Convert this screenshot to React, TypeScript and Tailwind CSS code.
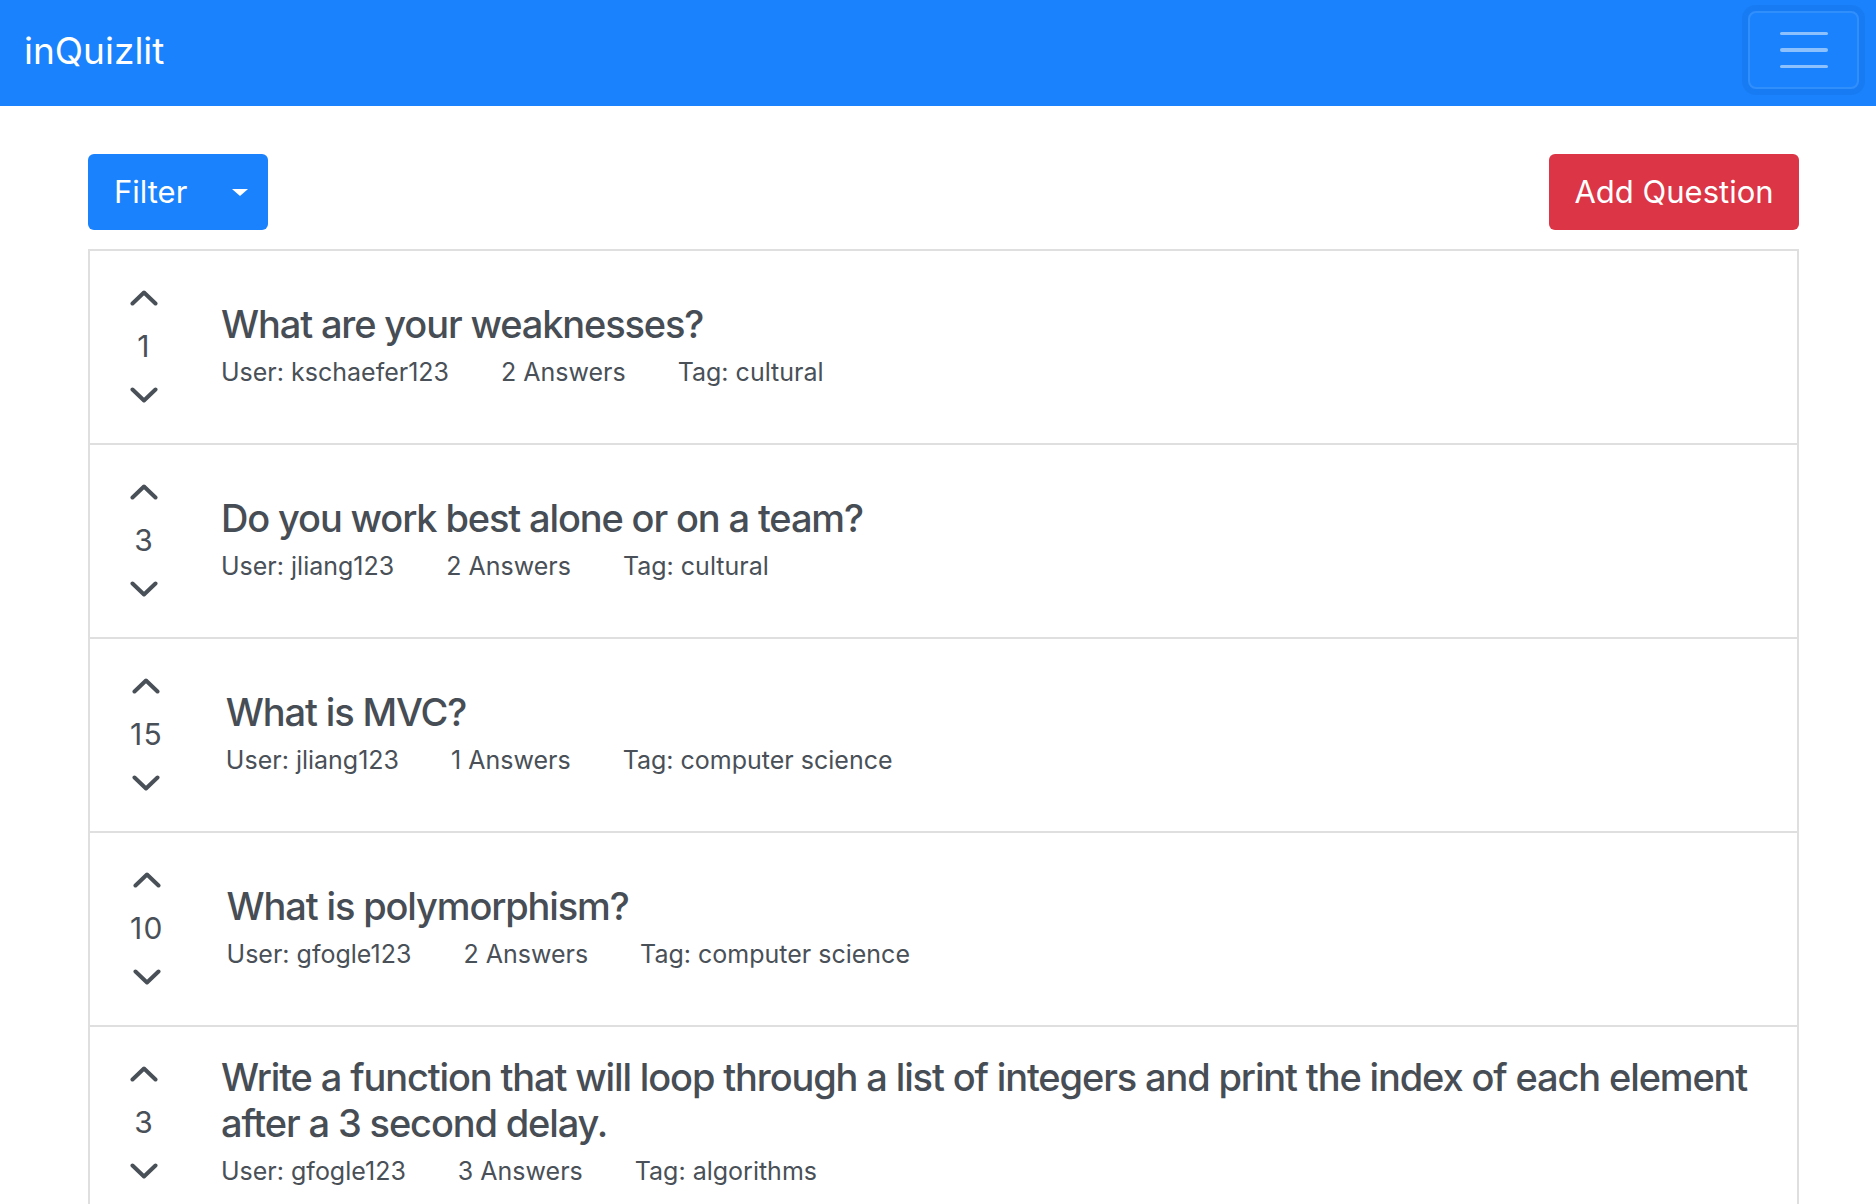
import React from 'react';

type Question = {
  votes: number;
  title: string;
  user: string;
  answers: number;
  tag: string;
};

const questions: Question[] = [
  { votes: 1, title: 'What are your weaknesses?', user: 'kschaefer123', answers: 2, tag: 'cultural' },
  { votes: 3, title: 'Do you work best alone or on a team?', user: 'jliang123', answers: 2, tag: 'cultural' },
  { votes: 15, title: 'What is MVC?', user: 'jliang123', answers: 1, tag: 'computer science' },
  { votes: 10, title: 'What is polymorphism?', user: 'gfogle123', answers: 2, tag: 'computer science' },
  {
    votes: 3,
    title:
      'Write a function that will loop through a list of integers and print the index of each element after a 3 second delay.',
    user: 'gfogle123',
    answers: 3,
    tag: 'algorithms',
  },
];

function Chevron({ up }: { up?: boolean }) {
  return (
    <svg width="28" height="16" viewBox="0 0 28 16" fill="none">
      <path
        d={up ? 'M2.5 13.5 L14 2.5 L25.5 13.5' : 'M2.5 2.5 L14 13.5 L25.5 2.5'}
        stroke="#495057"
        strokeWidth="4"
        strokeLinecap="round"
        strokeLinejoin="round"
      />
    </svg>
  );
}

function QuestionRow({ q }: { q: Question }) {
  return (
    <div className="flex items-center border-b-2 border-[#dfdfdf] pl-[40px] pr-[40px] py-[27px]">
      <div className="flex flex-col items-center shrink-0">
        <button className="h-[40px] flex items-center justify-center">
          <Chevron up />
        </button>
        <div className="h-[56px] flex items-center text-[30px] leading-none tracking-[0.04em] text-[#495057]">{q.votes}</div>
        <button className="h-[42px] flex items-center justify-center">
          <Chevron />
        </button>
      </div>
      <div className="ml-[63px] flex-1 min-w-0">
        <h3 className="text-[38px] leading-[46px] font-medium tracking-[-0.03em] text-[#474d54]">{q.title}</h3>
        <div className="mt-[8px] mb-[4px] flex gap-[52px] text-[25px] leading-[34px] text-[#495057]">
          <span>User: {q.user}</span>
          <span>{q.answers} Answers</span>
          <span>Tag: {q.tag}</span>
        </div>
      </div>
    </div>
  );
}

export default function App() {
  return (
    <div className="min-h-screen bg-white font-['Inter','Liberation_Sans',sans-serif]">
      <nav className="h-[106px] bg-[#1a82fc] flex items-start justify-between pl-[24px] pr-[17px]">
        <a className="mt-[32px] text-[37px] leading-none text-white">inQuizlit</a>
        <button className="mt-[11px] w-[111px] h-[78px] rounded-[8px] border-2 border-white/10 shadow-[0_0_0_6px_rgba(0,50,140,0.08)] flex flex-col items-center justify-center gap-[13px]">
          <span className="block w-[48px] h-[3.5px] rounded-full bg-white/50"></span>
          <span className="block w-[48px] h-[3.5px] rounded-full bg-white/50"></span>
          <span className="block w-[48px] h-[3.5px] rounded-full bg-white/50"></span>
        </button>
      </nav>

      <div className="ml-[88px] w-[1711px] pt-[48px]">
        <div className="flex justify-between items-center">
          <button className="w-[180px] h-[76px] rounded-[6px] bg-[#1a82fc] text-white text-[31px] flex items-center justify-between pl-[26px] pr-[20px]">
            <span>Filter</span>
            <span className="block w-0 h-0 border-l-[8.5px] border-r-[8.5px] border-t-[7px] border-l-transparent border-r-transparent border-t-white"></span>
          </button>
          <button className="w-[250px] h-[76px] rounded-[6px] bg-[#dc3545] text-white text-[31px] flex items-center justify-center">
            Add Question
          </button>
        </div>

        <div className="mt-[19px] border-t-2 border-x-2 border-[#dfdfdf]">
          {questions.map((q, i) => (
            <QuestionRow key={i} q={q} />
          ))}
        </div>
      </div>
    </div>
  );
}
